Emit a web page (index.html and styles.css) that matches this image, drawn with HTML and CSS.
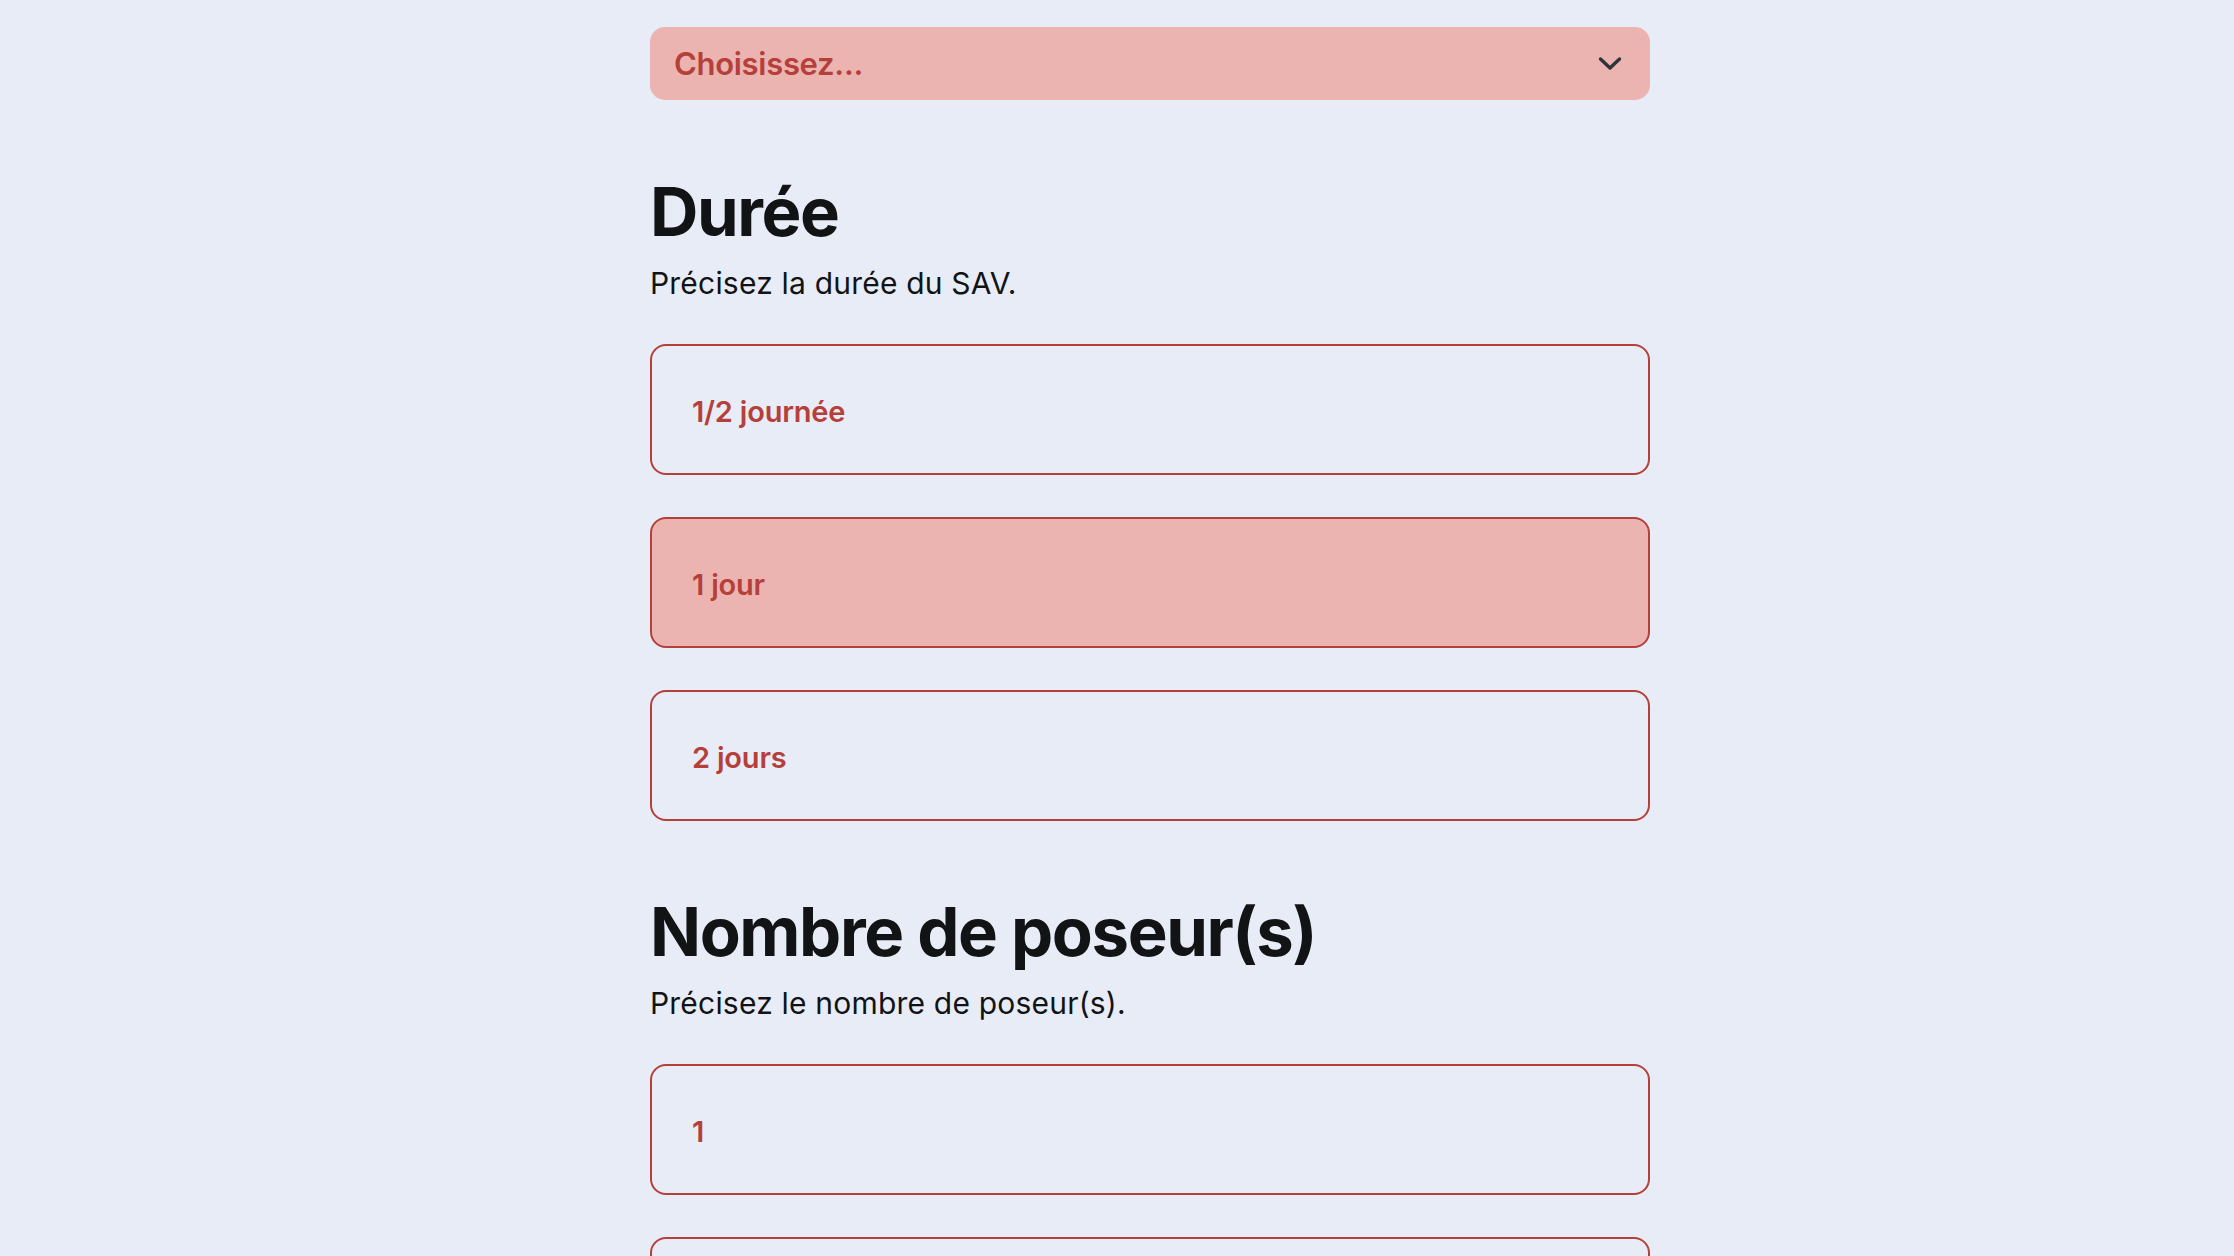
FILE: index.html
```html
<!DOCTYPE html>
<html lang="fr">
<head>
<meta charset="utf-8">
<title>SAV</title>
<link rel="stylesheet" href="styles.css">
</head>
<body>
<main class="form">
  <div class="select">
    <span class="select-label">Choisissez...</span>
    <svg class="chevron" width="24" height="16" viewBox="0 0 24 16" aria-hidden="true">
      <path d="M2.5 3 L12 12 L21.5 3" fill="none" stroke="#2d3338" stroke-width="3.4" stroke-linecap="round" stroke-linejoin="round"/>
    </svg>
  </div>

  <section class="section">
    <h2 class="title">Durée</h2>
    <p class="subtitle">Précisez la durée du SAV.</p>
    <div class="options">
      <div class="option">1/2 journée</div>
      <div class="option selected">1 jour</div>
      <div class="option">2 jours</div>
    </div>
  </section>

  <section class="section">
    <h2 class="title">Nombre de poseur(s)</h2>
    <p class="subtitle">Précisez le nombre de poseur(s).</p>
    <div class="options">
      <div class="option">1</div>
      <div class="option">2</div>
    </div>
  </section>
</main>
</body>
</html>
```

FILE: styles.css
```css
html, body {
  margin: 0;
  padding: 0;
}
body {
  background: #e8ecf6;
  font-family: Inter, "Noto Sans", "Liberation Sans", sans-serif;
  color: #111315;
  padding-left: 66px;
}
.form {
  width: 1000px;
  margin: 0 auto;
  padding-top: 27px;
  padding-bottom: 60px;
}
.select {
  height: 73px;
  box-sizing: border-box;
  background: #ecb4b1;
  border-radius: 15px;
  padding: 0 28px 0 24px;
  display: flex;
  align-items: center;
  justify-content: space-between;
}
.select-label {
  font-size: 31px;
  font-weight: 600;
  color: #b5403a;
  letter-spacing: -0.3px;
}
.chevron {
  display: block;
}
.title {
  margin: 78px 0 0;
  font-size: 67px;
  line-height: 1;
  font-weight: 700;
  letter-spacing: -1.4px;
  color: #111315;
}
.section + .section .title {
  margin-top: 77px;
}
.subtitle {
  margin: 20px 0 0;
  font-size: 30px;
  line-height: 1.2;
  font-weight: 400;
  letter-spacing: 0.2px;
  color: #111315;
}
.options {
  margin-top: 43px;
  display: flex;
  flex-direction: column;
  gap: 42px;
}
.option {
  height: 131px;
  box-sizing: border-box;
  border: 2px solid #b5403a;
  border-radius: 16px;
  padding: 4px 40px 0;
  display: flex;
  align-items: center;
  font-size: 29px;
  font-weight: 600;
  color: #b5403a;
  letter-spacing: -0.2px;
}
.option.selected {
  background: #ecb4b1;
}
```
